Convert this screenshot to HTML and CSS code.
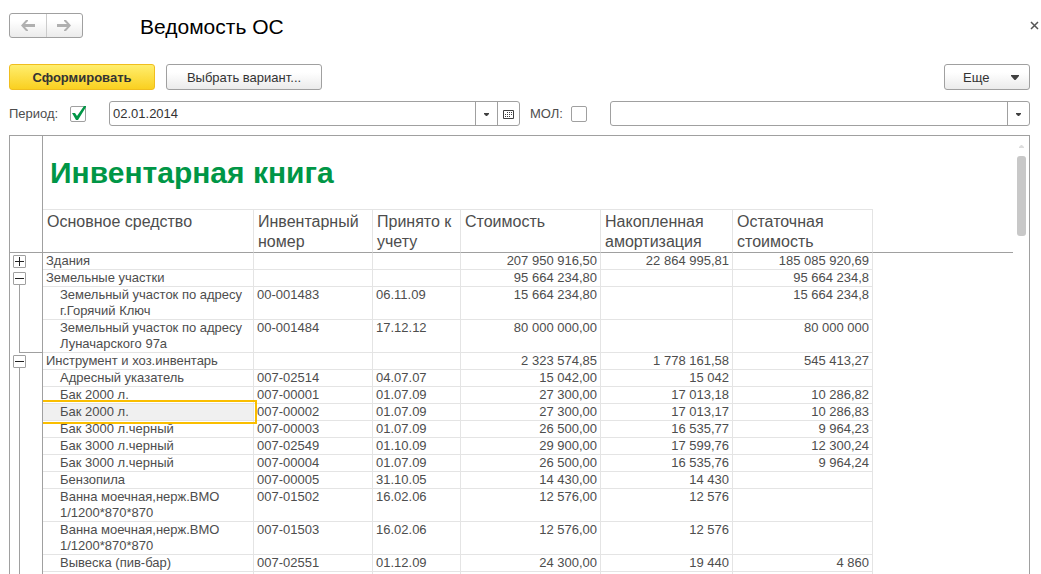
FILE: index.html
```html
<!DOCTYPE html>
<html lang="ru">
<head>
<meta charset="utf-8">
<title>Ведомость ОС</title>
<link rel="stylesheet" href="styles.css">
</head>
<body>
<header class="titlebar">
  <nav class="history">
    <button type="button" class="history-btn" aria-label="Назад"><svg width="14" height="11" viewBox="0 0 14 11"><path d="M0 5.500 5 0H7V1L4 4H14V7H4L7 10V11H5Z" /></svg></button>
    <button type="button" class="history-btn" aria-label="Вперед"><svg width="14" height="11" viewBox="0 0 14 11"><path d="M14 5.500 9 0H7V1L10 4H0V7H10L7 10V11H9Z" /></svg></button>
  </nav>
  <h1 class="page-title">Ведомость ОС</h1>
  <button type="button" class="close" aria-label="Закрыть"><svg width="9" height="9" viewBox="0 0 9 9"><path d="M1 1 8 8M8 1 1 8" /></svg></button>
</header>

<div class="toolbar">
  <button type="button" class="btn btn-primary">Сформировать</button>
  <button type="button" class="btn btn-variant">Выбрать вариант...</button>
  <button type="button" class="btn btn-more">Еще <svg width="8" height="5" viewBox="0 0 8 5"><path d="M0 0H8V1L4.500 5H3.500L0 1Z" /></svg></button>
</div>

<form class="filters">
  <div class="flag flag-period">
    <label for="use-period">Период:</label>
    <span class="check"><input type="checkbox" id="use-period" checked><svg class="tick" width="18" height="16" viewBox="0 0 18 16"><path d="M2 7H5L7 10 14 0H16V1L8 14H6Z" /></svg></span>
  </div>
  <div class="field field-period">
    <input type="text" value="02.01.2014" aria-label="Дата периода">
    <button type="button" aria-label="Выбрать период"><svg class="caret" width="5" height="3" viewBox="0 0 5 3"><path d="M0 0H5V1L3 3H2L0 1Z" /></svg></button>
    <button type="button" aria-label="Календарь"><svg width="11" height="9" viewBox="0 0 11 9"><path class="frame" d="M.5 .5H10.500V8.500H.5Z" /><path class="dots" d="M4 2.500H9M2 4.500H9M2 6.500H7" /></svg></button>
  </div>
  <div class="flag flag-mol">
    <label for="use-mol">МОЛ:</label>
    <span class="check"><input type="checkbox" id="use-mol"></span>
  </div>
  <div class="field field-mol">
    <input type="text" aria-label="МОЛ">
    <button type="button" aria-label="Выбрать МОЛ"><svg class="caret" width="5" height="3" viewBox="0 0 5 3"><path d="M0 0H5V1L3 3H2L0 1Z" /></svg></button>
  </div>
</form>

<main class="report">
  <table class="sheet">
    <colgroup>
      <col class="c-tree"><col class="c-name"><col class="c-num"><col class="c-date"><col class="c-cost"><col class="c-dep"><col class="c-rest"><col>
    </colgroup>
    <thead>
      <tr class="caption-row"><td class="tree"></td><th colspan="6" class="caption">Инвентарная книга</th><td class="blank"></td></tr>
      <tr class="head-row"><td class="tree"></td><th>Основное средство</th><th>Инвентарный номер</th><th>Принято к учету</th><th>Стоимость</th><th>Накопленная амортизация</th><th>Остаточная стоимость</th><td class="blank"></td></tr>
    </thead>
    <tbody>
      <tr class="group"><td class="tree"><button type="button" class="toggle plus" aria-label="Развернуть"></button></td><td>Здания</td><td></td><td></td><td>207 950 916,50</td><td>22 864 995,81</td><td>185 085 920,69</td><td class="blank"></td></tr>
      <tr class="group"><td class="tree open"><button type="button" class="toggle" aria-label="Свернуть"></button></td><td>Земельные участки</td><td></td><td></td><td>95 664 234,80</td><td></td><td>95 664 234,8</td><td class="blank"></td></tr>
      <tr><td class="tree line"></td><td>Земельный участок по адресу г.Горячий Ключ</td><td>00-001483</td><td>06.11.09</td><td>15 664 234,80</td><td></td><td>15 664 234,8</td><td class="blank"></td></tr>
      <tr><td class="tree line end"></td><td>Земельный участок по адресу Луначарского 97а</td><td>00-001484</td><td>17.12.12</td><td>80 000 000,00</td><td></td><td>80 000 000</td><td class="blank"></td></tr>
      <tr class="group"><td class="tree open"><button type="button" class="toggle" aria-label="Свернуть"></button></td><td>Инструмент и хоз.инвентарь</td><td></td><td></td><td>2 323 574,85</td><td>1 778 161,58</td><td>545 413,27</td><td class="blank"></td></tr>
      <tr><td class="tree line"></td><td>Адресный указатель</td><td>007-02514</td><td>04.07.07</td><td>15 042,00</td><td>15 042</td><td></td><td class="blank"></td></tr>
      <tr><td class="tree line"></td><td>Бак 2000 л.</td><td>007-00001</td><td>01.07.09</td><td>27 300,00</td><td>17 013,18</td><td>10 286,82</td><td class="blank"></td></tr>
      <tr><td class="tree line"></td><td class="selected">Бак 2000 л.</td><td>007-00002</td><td>01.07.09</td><td>27 300,00</td><td>17 013,17</td><td>10 286,83</td><td class="blank"></td></tr>
      <tr><td class="tree line"></td><td>Бак 3000 л.черный</td><td>007-00003</td><td>01.07.09</td><td>26 500,00</td><td>16 535,77</td><td>9 964,23</td><td class="blank"></td></tr>
      <tr><td class="tree line"></td><td>Бак 3000 л.черный</td><td>007-02549</td><td>01.10.09</td><td>29 900,00</td><td>17 599,76</td><td>12 300,24</td><td class="blank"></td></tr>
      <tr><td class="tree line"></td><td>Бак 3000 л.черный</td><td>007-00004</td><td>01.07.09</td><td>26 500,00</td><td>16 535,76</td><td>9 964,24</td><td class="blank"></td></tr>
      <tr><td class="tree line"></td><td>Бензопила</td><td>007-00005</td><td>31.10.05</td><td>14 430,00</td><td>14 430</td><td></td><td class="blank"></td></tr>
      <tr><td class="tree line"></td><td>Ванна моечная,нерж.ВМО 1/1200*870*870</td><td>007-01502</td><td>16.02.06</td><td>12 576,00</td><td>12 576</td><td></td><td class="blank"></td></tr>
      <tr><td class="tree line"></td><td>Ванна моечная,нерж.ВМО 1/1200*870*870</td><td>007-01503</td><td>16.02.06</td><td>12 576,00</td><td>12 576</td><td></td><td class="blank"></td></tr>
      <tr><td class="tree line"></td><td>Вывеска (пив-бар)</td><td>007-02551</td><td>01.12.09</td><td>24 300,00</td><td>19 440</td><td>4 860</td><td class="blank"></td></tr>
      <tr><td class="tree line"></td><td></td><td></td><td></td><td></td><td></td><td></td><td class="blank"></td></tr>
    </tbody>
  </table>
  <div class="scrollbar">
    <svg width="5" height="3" viewBox="0 0 5 3"><path d="M2 0H3L5 2V3H0V2Z" /></svg>
    <div class="thumb"></div>
  </div>
</main>
</body>
</html>
```
FILE: styles.css
```css
* { box-sizing: border-box; }

body {
  margin: 0;
  height: 100vh;
  overflow: hidden;
  display: flex;
  flex-direction: column;
  padding: 13px 11px 0 9px;
  background: #fff;
  color: #4d4d4d;
  font: 13px/16px "Liberation Sans", Arial, sans-serif;
}

button, input { font: inherit; color: inherit; margin: 0; padding: 0; }
svg { display: block; }

.titlebar { display: flex; align-items: center; height: 25px; margin-right: -10px; }

.history {
  display: flex;
  width: 74px;
  height: 25px;
  border: 1px solid #a0a0a0;
  border-radius: 3px;
  background: linear-gradient(#fff 30%, #ebebeb);
}
.history-btn { flex: 1; display: grid; place-items: center; border: 0; background: none; }
.history-btn + .history-btn { border-left: 1px solid #ccc; }
.history-btn path { fill: #b0b0b0; }

.page-title { flex: 1; margin: 2px 0 0 57px; font-size: 21px; line-height: 24px; font-weight: 400; color: #000; }

.close { display: grid; place-items: center; width: 11px; height: 24px; border: 0; background: none; }
.close path { fill: none; stroke: #555; stroke-width: 1.5; }

.toolbar { display: flex; gap: 11px; margin-top: 26px; }
.btn {
  height: 26px;
  padding-top: 2px;
  border: 1px solid #a0a0a0;
  border-radius: 3px;
  background: linear-gradient(#fff 30%, #ebebeb);
  color: #333;
}
.btn-primary {
  width: 146px;
  border-color: #f0be1e;
  background: linear-gradient(#ffee6e, #fad020);
  font-weight: 700;
}
.btn-variant { width: 156px; }
.btn-more { display: flex; align-items: center; justify-content: space-between; width: 86px; margin-left: auto; padding: 1px 10px 0 18px; }
.btn-more path, .caret path { fill: #404040; }

.filters { display: flex; align-items: center; margin-top: 11px; }
.flag { display: flex; align-items: center; flex: none; }
.flag-period { width: 100px; }
.flag-period label { width: 61px; }
.flag-mol { width: 90px; padding-left: 10px; }
.flag-mol label { width: 41px; }

.check { position: relative; display: block; width: 16px; height: 16px; }
.check input { appearance: none; display: block; width: 16px; height: 16px; border: 1px solid #a0a0a0; border-radius: 2px; background: #fff; }
.tick { position: absolute; left: 0; top: 0; pointer-events: none; }
.tick path { fill: #009646; }

.field { display: flex; height: 25px; min-width: 0; border: 1px solid #a0a0a0; border-radius: 3px; background: #fff; }
.field-period { flex: 411 1 0; }
.field-mol { flex: 420 1 0; }
.field input { flex: 1; min-width: 0; border: 0; background: none; padding-left: 3px; outline: 0; color: #333; }
.field button { display: grid; place-items: center; width: 22px; padding-top: 1px; border: 0; border-left: 1px solid #a0a0a0; background: none; }
.frame { fill: none; stroke: #404040; }
.dots { fill: none; stroke: #404040; stroke-dasharray: 1 1; }

.report { flex: 1; display: flex; min-height: 0; overflow: hidden; margin-top: 9px; border: 1px solid #a0a0a0; border-bottom: 0; align-items: flex-start; }

.sheet { flex: 1; width: 100%; table-layout: fixed; border-collapse: separate; border-spacing: 0; }
.c-tree { width: 33px; }
.c-name { width: 211px; }
.c-num { width: 119px; }
.c-date { width: 88px; }
.c-cost, .c-rest { width: 140px; }
.c-dep { width: 132px; }

.sheet th, .sheet td { padding: 0 3px; text-align: left; vertical-align: top; font-weight: 400; border: 0 solid #e4e4e4; border-width: 0 1px 1px 0; }
.sheet tbody td { height: 17px; }
.sheet td:nth-child(n+5) { text-align: right; }
.sheet td:nth-child(2) { padding-left: 17px; }
.sheet .group td:nth-child(2) { padding-left: 3px; }
.sheet .blank { border: 0; }

.sheet .caption-row th { height: 74px; padding: 0 7px; border-right: 0; vertical-align: middle; font-size: 30px; line-height: 36px; font-weight: 700; color: #009646; }
.sheet .head-row th { height: 43px; padding: 2px 4px 0; font-size: 16px; line-height: 20px; border-bottom-color: #a0a0a0; }
.sheet .head-row td { border-bottom: 1px solid #a0a0a0; }

.sheet .tree { padding: 2px 3px 0; border-right: 1px solid #a0a0a0; border-bottom-width: 0; background: no-repeat 9px 0 / 1px 100%; }
.sheet .head-row .tree { border-bottom-width: 1px; }
.sheet .line, .sheet .open { background-image: linear-gradient(#a0a0a0, #a0a0a0); }
.sheet .open { background-position: 9px 100%; background-size: 1px 50%; }
.sheet .end { background-image: linear-gradient(#a0a0a0, #a0a0a0), linear-gradient(#a0a0a0, #a0a0a0); background-position: 9px 0, 9px 100%; background-size: 1px 100%, 100% 1px; }

.toggle {
  display: block;
  width: 13px;
  height: 13px;
  border: 1px solid #a0a0a0;
  border-radius: 1px;
  background: linear-gradient(#222, #222) center / 9px 1px no-repeat, #fff;
}
.plus { background: linear-gradient(#222, #222) center / 9px 1px no-repeat, linear-gradient(#222, #222) center / 1px 9px no-repeat, #fff; }

.sheet .selected { position: relative; background: #f0f0f0; }
.selected::after { content: ""; position: absolute; z-index: 1; inset: -4px -4px -4px 0; border: 2px solid #fabe00; border-left: 0; }

.scrollbar { flex: none; display: flex; flex-direction: column; align-items: center; gap: 8px; width: 16px; padding-top: 9px; }
.scrollbar path { fill: #ddd; }
.thumb { width: 9px; height: 80px; border-radius: 3px; background: #c8c8c8; }
```
